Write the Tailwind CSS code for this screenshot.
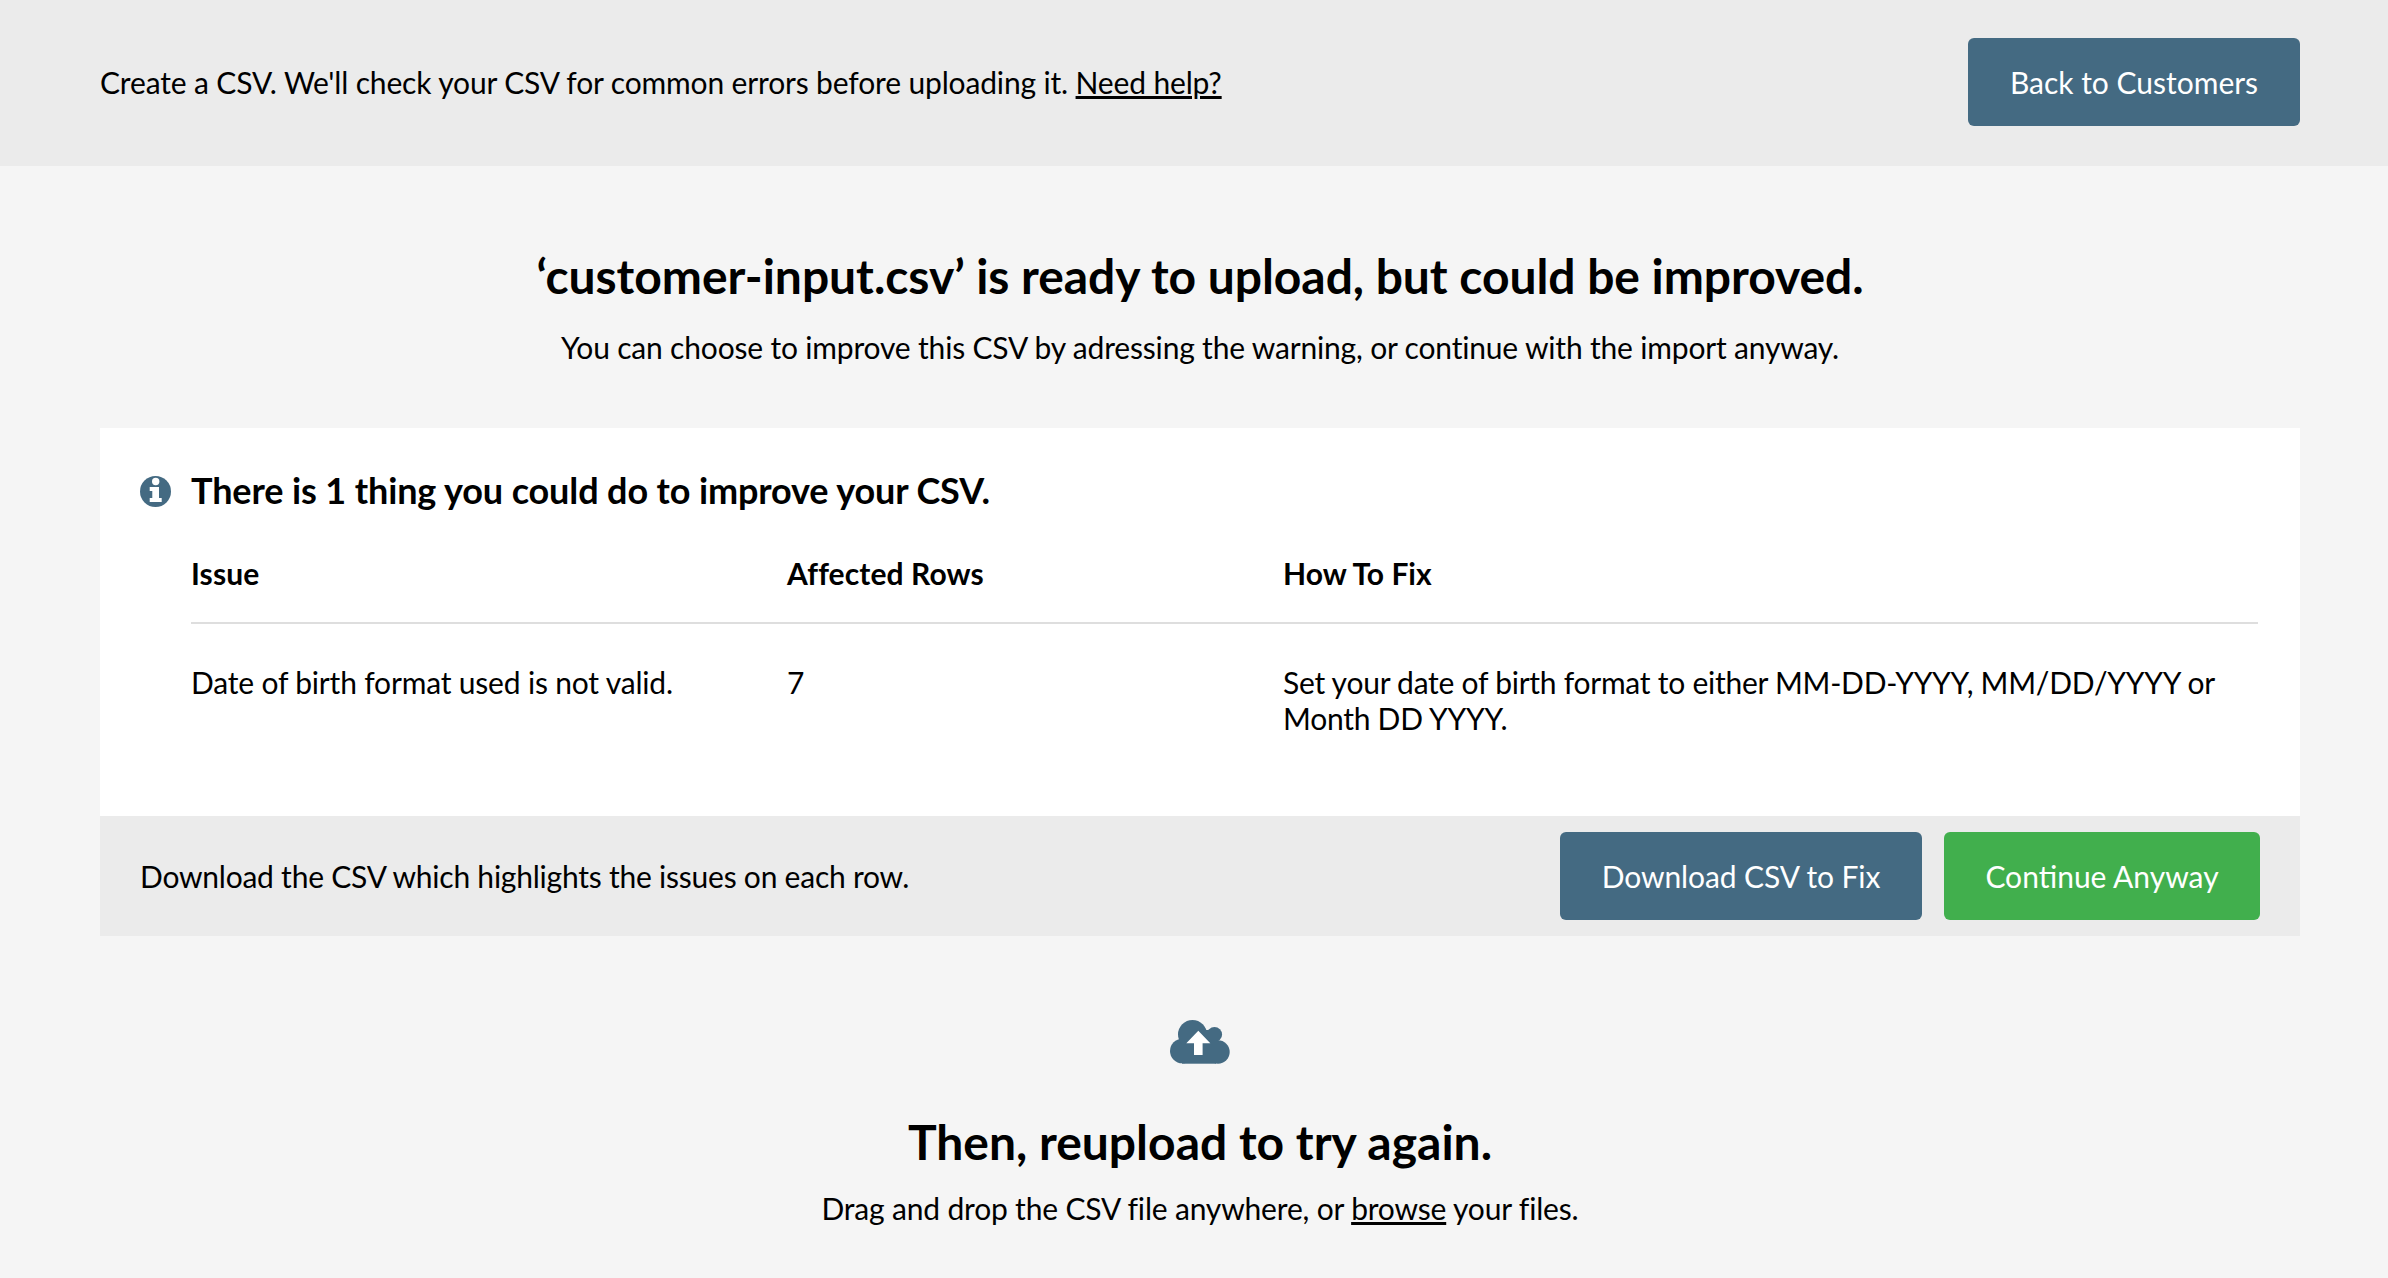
<!DOCTYPE html>
<html><head><meta charset="utf-8"><script src="https://cdn.jsdelivr.net/npm/@tailwindcss/browser@4"></script></head>
<body class="bg-[#f5f5f5] text-black font-['Lato',sans-serif] text-[30px] leading-[36px] tracking-[-0.18px]">
<header class="h-[166px] bg-[#ebebeb] flex items-center justify-between pl-[100px] pr-[88px] pb-[2px]">
<p class="tracking-[-0.15px]">Create a CSV. We'll check your CSV for common errors before uploading it. <a class="underline">Need help?</a></p>
<a class="h-[88px] w-[332px] rounded-[6px] bg-[#446a82] text-white tracking-normal flex items-center justify-center">Back to Customers</a>
</header>
<main class="pl-[100px] pr-[88px]">
<div class="text-center pt-[82px] pb-[63px]">
<h1 class="text-[48px] leading-[56px] font-bold tracking-[-0.05px]">‘customer-input.csv’ is ready to upload, but could be improved.</h1>
<p class="mt-[25px]">You can choose to improve this CSV by adressing the warning, or continue with the import anyway.</p>
</div>
<section class="bg-white">
<div class="pl-[40px] pr-[42px] pt-[40px] pb-[80px]">
<div class="flex items-center gap-[20px]">
<svg class="w-[31px] h-[31px] mt-[2px]" viewBox="0 0 31 31"><circle cx="15.500" cy="15.500" r="15.500" fill="#446a82"/><circle cx="15.700" cy="5.500" r="3.700" fill="#fff"/><path d="M9.700 11H19V22H21.700V26H9.700V22H12.300V15H9.700z" fill="#fff"/></svg>
<h2 class="text-[36px] leading-[44px] font-bold tracking-[-0.12px]">There is 1 thing you could do to improve your CSV.</h2>
</div>
<div class="ml-[51px] mt-[43px]">
<div class="grid grid-cols-[596px_496px_1fr] border-b-2 border-[#dedede] pb-[31px] font-bold tracking-[0.1px]"><span>Issue</span><span>Affected Rows</span><span class="tracking-normal">How To Fix</span></div>
<div class="grid grid-cols-[596px_496px_1fr] pt-[40px]"><span>Date of birth format used is not valid.</span><span>7</span><span class="tracking-[-0.25px]">Set your date of birth format to either MM-DD-YYYY, MM/DD/YYYY or Month DD YYYY.</span></div>
</div>
</div>
<div class="h-[120px] bg-[#ebebeb] flex items-center justify-between pl-[40px] pr-[40px]">
<p class="tracking-[-0.23px]">Download the CSV which highlights the issues on each row.</p>
<div class="flex gap-[22px] tracking-normal">
<a class="h-[88px] w-[362px] rounded-[6px] bg-[#446a82] text-white tracking-[-0.1px] flex items-center justify-center">Download CSV to Fix</a>
<a class="h-[88px] w-[316px] rounded-[6px] bg-[#41af4d] text-white flex items-center justify-center">Continue Anyway</a>
</div></div>
</section>
<div class="flex flex-col items-center pt-[84px]">
<svg class="w-[60px] h-[44px]" viewBox="0 0 60 44"><g fill="#446a82"><circle cx="12.300" cy="31" r="12.300"/><circle cx="22.500" cy="14.500" r="14.500"/><circle cx="44.500" cy="14.500" r="7.600"/><circle cx="48" cy="32" r="11.700"/><rect x="12" y="16" width="34" height="27.700"/><rect x="33" y="10" width="8" height="10"/></g><path d="M28.300 10.700 40.300 23.300H32.600V35H24V23.300H16.300z" fill="#fff"/></svg>
<h2 class="mt-[50px] text-[48px] leading-[56px] font-bold tracking-normal">Then, reupload to try again.</h2>
<p class="mt-[20px]">Drag and drop the CSV file anywhere, or <a class="underline">browse</a> your files.</p>
</div>
</main>
</body></html>
